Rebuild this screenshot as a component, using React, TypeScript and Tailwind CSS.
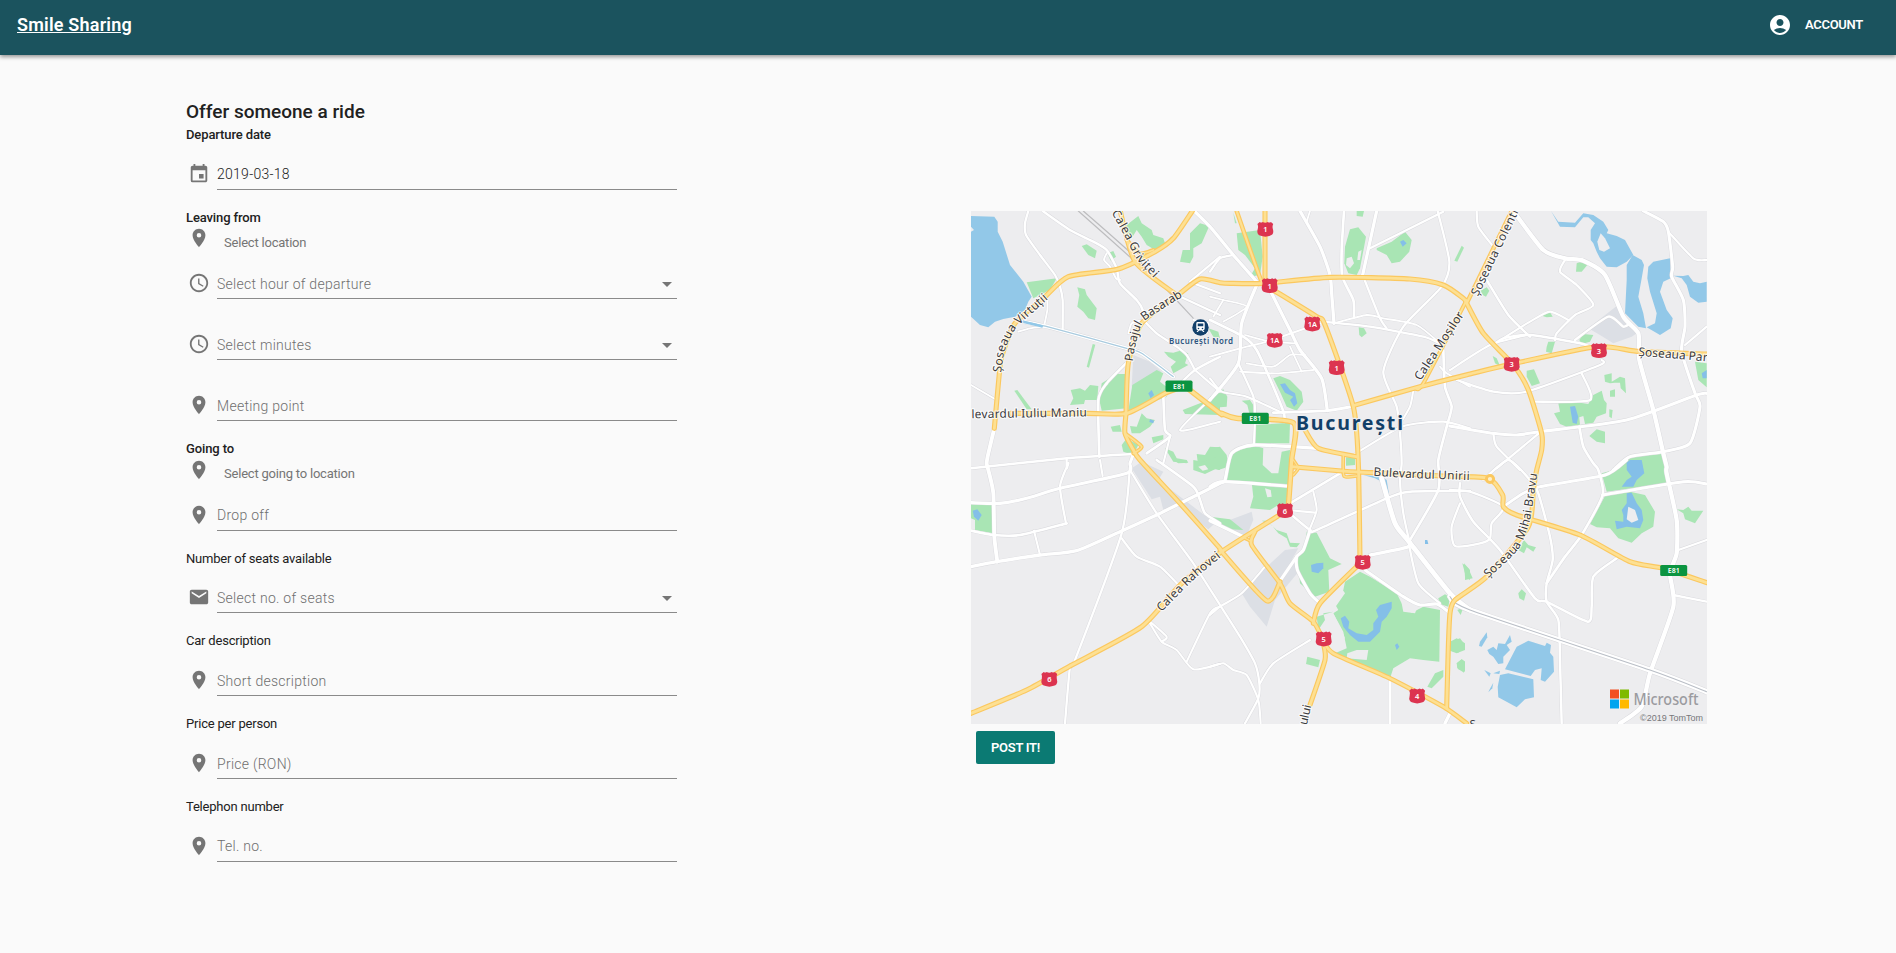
import React from "react";
import {
  MdAccessTime,
  MdAccountCircle,
  MdArrowDropDown,
  MdEvent,
  MdMail,
  MdPlace,
} from "react-icons/md";

/* ---------- map geometry ---------- */

// Map data is stored per tile, three units to a pixel.
const TILES: Record<string, [number, number]> = {
  A: [960, 200],
  B: [1210, 200],
  C: [1450, 200],
  D: [960, 460],
  E: [1210, 460],
  F: [1450, 460],
};

function toPoints(data: string): [number, number][] {
  let origin = TILES.A;
  const out: [number, number][] = [];
  for (const token of data.trim().split(/\s+/)) {
    if (TILES[token]) {
      origin = TILES[token];
      continue;
    }
    const [x, y] = token.split(",").map(Number);
    out.push([origin[0] + x / 3, origin[1] + y / 3]);
  }
  return out;
}

const polygon = (data: string) =>
  toPoints(data)
    .map(([x, y]) => `${x.toFixed(1)},${y.toFixed(1)}`)
    .join(" ");

// Catmull-Rom spline with low tension, so that roads bend softly.
function curve(data: string): string {
  const p = toPoints(data);
  const k = 0.11;
  let d = `M${p[0][0]} ${p[0][1]}`;
  for (let i = 0; i < p.length - 1; i++) {
    const a = p[i - 1] ?? p[i];
    const b = p[i];
    const c = p[i + 1];
    const e = p[i + 2] ?? c;
    d += `C${b[0] + (c[0] - a[0]) * k} ${b[1] + (c[1] - a[1]) * k} ${c[0] - (e[0] - b[0]) * k} ${c[1] - (e[1] - b[1]) * k} ${c[0]} ${c[1]}`;
  }
  return d;
}

const GREY_AREAS = [
  "A 520,465 570,485 605,515 515,560",
  "D 515,25 545,5 610,35 595,60 765,190 745,208 650,135 610,150 600,110 575,118",
  "E 45,185 125,155 130,180 115,215 95,230 40,205",
  "E 95,400 160,330 225,270 265,265 245,300 270,330 195,420 170,500 120,440",
  "C 415,385 500,318 530,370 560,400 545,410 490,430 450,405",
];

const PARKS = [
  "A 200,247 290,235 270,270 220,295",
  "A 500,75 535,48 545,70 575,90 580,105 610,115 615,130 585,150 560,135 545,110 530,90 515,115 500,95",
  "A 690,100 720,70 748,78 725,130 700,145 700,170 690,190 660,185 668,150 690,150",
  "A 365,138 380,133 410,152 405,175 385,165",
  "A 352,262 375,268 380,285 410,325 405,360 385,355 370,335 352,320 358,285",
  "A 442,160 460,153 468,170 452,182",
  "A 398,432 406,434 387,503 380,500",
  "A 163,572 172,570 215,628 200,628",
  "A 332,570 360,565 375,572 390,555 415,558 412,600 375,600 372,612 330,615 340,595",
  "A 425,550 470,522 495,522 500,625 425,632 418,600",
  "A 517,555 590,510 610,520 600,545 625,565 620,590 505,632",
  "A 612,455 640,458 660,452 685,460 675,490 685,495 640,520 632,500 648,485 625,470",
  "A 452,680 480,675 485,695 458,695",
  "A 510,678 530,680 545,640 560,655 585,660 570,680 540,700 515,700",
  "A 485,735 500,715 535,735 520,765 490,755",
  "A 668,630 720,610 780,595 780,645 675,642",
  "A 575,712 610,705 610,718 580,730",
  "A 615,745 640,755 650,775 680,780 680,790 640,785",
  "A 710,762 735,765 750,740 775,742 780,810 715,800",
  "A 745,385 775,395 780,415 760,410",
  "B 80,100 150,90 158,170 150,225 120,230 135,205 105,165 85,150",
  "B 70,38 80,70 75,70",
  "B 420,88 445,82 468,110 450,205 440,225 415,220 403,190 405,140",
  "B 440,33 462,33 458,50 440,48",
  "B 500,145 545,125 585,95 605,120 598,155 570,185 545,190 530,165 500,150",
  "B 755,137 762,143 742,185 733,182",
  "B 446,382 462,385 470,400 455,412 448,405",
  "B 190,535 210,528 240,540 275,575 280,605 260,632 230,620 210,575",
  "B 0,590 40,568 52,590 50,620 30,622 0,610",
  "B 95,602 120,600 130,615 130,640 118,640 112,615",
  "B 135,675 240,668 238,730 135,730",
  "B 0,745 30,740 50,765 55,800 25,810 0,790",
  "B 408,772 435,770 435,795 408,797",
  "E 45,65 65,-20 130,-45 160,-35 158,15 185,40 205,40 215,-25 240,-30 235,78",
  "E 125,68 235,75 228,135 205,135 180,150 120,145 130,110",
  "E 0,170 60,178 100,210 60,208 0,182",
  "D 33,133 102,133 100,220 45,210 45,180 33,175",
  "D 700,0 700,30 735,42 765,28 780,15 780,-15 760,-5 730,5",
  "D 640,0 680,0 685,8 655,10",
  "E 155,182 185,195 205,220 230,235 240,260 260,262 270,250 240,248 230,220 200,210 170,182",
  "E 290,215 320,218 360,295 395,312 355,330 358,395 315,410 270,370 262,290 285,265",
  "E 450,335 480,350 560,400 580,440 605,458 640,440 690,450 688,605 640,600 600,595 550,625 540,655 400,595 375,580 410,565 400,515 370,460 385,450 365,415 400,390 405,365",
  "E 320,470 370,455 340,460 345,480 325,510",
  "E 685,415 705,403 720,412 715,440 690,432",
  "E 292,590 330,600 325,622 288,612",
  "E 652,680 675,640 700,630 700,650 665,685",
  "E 722,545 750,535 765,555 745,578 722,572",
  "E 740,610 755,598 765,605 762,638 742,625",
  "E 762,310 780,330 780,360 765,350",
  "E 742,450 760,442 752,465",
  "C 380,190 400,182 412,195 395,215 378,215",
  "C 92,272 110,262 118,272 108,290 98,285",
  "C 275,347 300,337 308,350 290,352",
  "C 388,420 400,402 430,405 420,425 395,432",
  "C 290,440 295,425 315,425 305,460 288,455",
  "C 230,512 252,508 270,550 245,558 230,530",
  "C 128,468 140,475 150,498 135,490",
  "C 312,640 330,635 325,610 370,605 415,612 430,585 455,572 462,600 470,610 468,640 440,650 430,668 350,680 330,672",
  "C 463,525 485,520 485,545 510,530 525,535 528,580 512,565 510,548 495,548 480,550 465,545",
  "C 480,572 495,568 495,590 480,590",
  "C 478,628 488,630 485,655 478,650",
  "C 418,708 440,688 465,695 465,730 440,725",
  "C 735,485 770,490 770,562 745,540",
  "C 490,810 540,770 635,762 650,800 650,810 F 655,70 470,95 455,40",
  "F 465,108 540,95 585,105 615,155 610,200 575,220 545,248 505,235 480,205 440,202 420,192",
  "F 680,148 700,150 715,140 725,152 760,152 735,190 705,178 700,160",
  "F 205,270 222,240 235,255 258,262 250,275 230,262 222,280",
  "F 37,310 55,325 68,355 45,360 45,340",
  "F 205,400 215,388 228,400 222,422 208,415",
];

const LAKES = [
  "A 33,48 103,50 113,65 113,95 128,125 150,195 190,245 215,290 205,305 195,330 165,350 130,357 105,365 85,382 60,375 33,350 33,95 42,90 33,80",
  "C 303,33 325,65 375,68 400,40 430,45 460,65 475,90 470,100 500,108 525,120 550,165 530,185 500,202 470,200 450,175 440,155 430,130 422,120 422,90 435,70 415,52 400,52 375,82 330,80",
  "C 548,165 575,180 582,195 575,235 565,290 580,340 588,385 565,380 525,340 530,240 530,195",
  "C 595,200 610,185 660,175 662,235 640,245 630,275 650,330 668,355 662,385 630,405 590,382 615,370 620,340 600,275 592,235",
  "C 670,227 700,228 715,225 730,245 750,250 770,245 770,305 745,308 720,290 710,255 695,235",
  "F 165,628 200,560 235,542 285,558 290,548 303,555 300,578 310,590 312,635 285,665 272,660 275,625 255,630 242,648",
  "F 150,645 175,640 250,658 252,712 225,718 200,742 145,712 143,680",
  "F 112,570 130,560 140,570 145,550 165,552 180,525 185,545 170,555 180,570 160,590 160,610 145,612 130,590 118,582",
  "F 90,545 110,517 112,532 95,560 87,558",
  "F 103,630 122,640 118,650",
  "F 130,640 150,632 148,642",
  "F 118,690 130,668 127,685 115,697",
  "E 460,45 515,50 530,60 538,108 525,105 515,65 495,55",
];

const PONDS = [
  "B 210,553 225,550 240,570 255,580 262,610 252,620 240,600 250,590 225,578",
  "B 570,125 580,120 590,130 578,140",
  "E 392,475 405,467 418,485 415,505 440,520 470,525 490,510 490,490 505,470 498,450 510,435 545,425 545,445 530,470 515,485 510,515 480,545 445,545 420,525 400,500",
  "E 303,315 320,310 340,308 340,325 325,340 305,335",
  "E 645,240 652,240 655,252 645,252",
  "E 555,555 562,550 568,560 560,570",
  "F 540,0 575,0 583,40 560,60 550,80 515,80 530,60 545,50 530,30 530,8",
  "F 530,100 545,98 560,130 575,150 580,180 570,205 530,200 500,208 495,182 520,185 520,165 515,150 530,130",
  "C 360,620 375,618 385,650 380,672 368,668",
  "C 530,790 555,780 575,790 580,810 535,810",
  "C 755,520 770,510 770,535 758,535",
  "D 38,152 52,148 65,165 55,182 42,170",
  "A 565,580 575,570 582,585 572,595",
  "A 570,658 582,662 580,670 568,666",
];

// Clear patches inside the parks: lake islands and built-up blocks.
const CLEARINGS = [
  "C 442,125 452,100 465,115 480,145 462,155 448,150",
  "F 535,140 555,150 565,180 545,188 530,178",
  "E 345,475 370,460 405,535 380,555 350,520",
  "E 440,570 475,570 470,600 410,595 412,580",
  "E 575,430 590,425 625,435 615,460 580,455",
  "E 360,400 395,385 405,400 370,450 340,450",
  "E 165,85 182,90 185,110 172,112",
  "B 410,175 425,170 432,190 420,205 408,195",
  "B 445,155 455,150 450,180 442,180",
  "C 388,652 400,648 405,672 390,675",
  "D 715,20 735,15 745,28 728,32",
];

const WHITE_ROADS: [number, string][] = [
  [2, "A 205,33 195,70 198,105 240,165 285,225 300,260 308,300 308,388"],
  [2.2, "A 248,33 330,90 400,125 440,150 470,205 480,250 530,300 548,330 550,360"],
  [1.6, "A 440,160 432,180 450,200 468,235 480,240"],
  [2, "A 550,360 590,400 650,440 680,465 705,510"],
  [1.6, "A 505,400 515,370 540,362"],
  [1.6, "A 262,300 262,330 252,380"],
  [1.6, "A 252,380 210,385 175,395"],
  [1.6, "A 33,555 110,600"],
  [3.6, "A 103,685 85,760 80,790 D 85,30 100,100 103,230 112,305"],
  [2.2, "A 33,805 320,775 520,762"],
  [2.4, "A 498,490 440,550 415,600 418,770"],
  [2, "A 320,775 320,805 D 325,10 300,80 318,190"],
  [1.8, "D 420,0 428,48"],
  [2.8, "A 520,762 D 510,10 500,40 300,85 200,115 120,130 33,128"],
  [2.4, "D 33,212 100,225 180,225 320,190"],
  [1.8, "D 222,212 240,285"],
  [3, "D 33,320 110,305 240,285 350,272 480,215 590,165 700,110 780,70 E 45,60 65,-20 130,-45 320,-35"],
  [2, "D 510,20 485,220 345,600 330,620 315,790"],
  [2, "D 485,235 530,290 600,320 660,380"],
  [2, "D 510,30 590,160 700,310 780,435 E 90,530 135,610 148,670 145,715 105,790"],
  [1.8, "E 0,620 40,610 70,630 110,645 145,720 152,790"],
  [1.8, "E 150,670 190,610 300,540"],
  [1.8, "E 0,465 30,440 95,400 165,320"],
  [1.8, "D 780,440 750,460 680,605"],
  [1.8, "D 570,490 605,545 650,570 700,628 780,612"],
  [1.8, "D 570,485 620,530 605,545"],
  [2.4, "D 590,0 700,80 720,120 735,160 780,190"],
  [2.4, "A 610,590 615,690 630,710 560,760"],
  [1.8, "A 630,710 610,790"],
  [1.8, "A 780,570 660,690 780,665"],
  [1.8, "A 700,250 780,280"],
  [2, "A 650,285 780,345"],
  [1.8, "A 690,245 780,170"],
  [2, "A 780,470 705,510 650,560 610,590"],
  [1.8, "A 705,510 780,575"],
  [1.8, "A 700,360 745,370 740,400"],
  [3, "A 703,33 B 0,80 70,165 140,245"],
  [2, "B 0,215 30,175 70,165"],
  [3, "B 140,255 95,370 85,490 0,600"],
  [3, "B 180,270 240,390 270,450 335,535 352,632"],
  [2.4, "B 0,360 100,410 140,450 190,560 222,640 222,665"],
  [2.6, "B 190,638 350,632 425,620"],
  [2, "B 85,490 130,590 135,640 132,730"],
  [1.6, "B 0,470 110,440 170,425 330,370"],
  [1.5, "B 90,515 200,520 310,510"],
  [1.5, "B 110,490 190,500 240,465 285,465"],
  [1.5, "B 240,440 275,515"],
  [1.5, "B 0,290 40,300 110,320 40,365"],
  [1.5, "B 40,300 10,350"],
  [1.5, "B 105,405 180,425 255,430"],
  [1.8, "B 0,535 35,575 110,590 220,640"],
  [3, "B 270,33 330,140 360,225 365,280 372,370"],
  [1.5, "B 300,33 290,65"],
  [2.4, "B 402,33 395,150 397,230 430,300 432,350"],
  [3, "B 500,33 458,225"],
  [2, "B 458,225 510,355 530,385"],
  [2, "B 480,145 700,35"],
  [2, "B 683,33 718,185 695,260 580,380 520,515 560,620 570,700 575,790 E 570,60 580,160 597,240"],
  [2, "B 340,365 480,380 640,410 690,430"],
  [1.6, "B 372,370 470,345 520,355 620,375 690,430"],
  [2.4, "B 700,450 705,560 725,620 710,680 685,780 E 685,90 597,245"],
  [1.6, "B 690,500 710,520 780,560"],
  [1.8, "B 610,570 600,620 565,680"],
  [1.8, "B 430,765 575,680 700,665 780,685"],
  [2.8, "C 0,678 130,700 200,705 270,695 530,660 740,585 770,580"],
  [1.8, "C 0,510 120,435 230,405"],
  [2, "C 80,33 85,80 130,140"],
  [4, "C 195,40 280,150 345,175 400,182 465,225 520,350 565,400 568,480 610,630 640,760 650,800 F 650,40 680,180 680,280 660,340 670,440 600,640 575,740 510,790"],
  [2.2, "C 110,240 175,345 240,410"],
  [1.8, "C 160,415 240,365 300,335 355,360"],
  [2, "C 345,180 330,215 380,255 430,315 375,345 320,400 315,420"],
  [2.2, "C 130,435 160,415 240,405 390,430 420,440"],
  [2.2, "C 375,420 475,350 520,380 540,370"],
  [2.8, "C 580,33 640,65 655,95 668,200 665,230 700,300 705,380 695,455 735,580 750,620 720,730 640,755 540,770 490,810"],
  [1.8, "C 655,95 730,175 770,180"],
  [1.8, "C 705,435 770,380"],
  [2, "C 20,540 130,575 230,575 450,495 455,480"],
  [2, "C 395,520 420,600 250,605"],
  [2, "C 270,697 140,805"],
  [2, "C 130,700 140,740 210,810"],
  [2.6, "F 530,0 465,45 270,80 220,100 160,140"],
  [2.2, "F 100,60 175,0 240,60 265,100 300,230 308,300 290,370 290,425 325,480 330,600 335,790"],
  [2.4, "C 388,680 400,740 430,790 F 445,30 458,105 395,225 345,290 290,370"],
  [2.8, "F 458,105 700,65 770,72"],
  [2.2, "F 500,295 430,350 425,440 413,485 290,425 255,415 150,270 70,185 30,110 30,70"],
  [2, "F 0,90 60,95 160,140 125,190 120,235 90,250 15,258 5,200 30,130"],
  [2, "F 685,270 770,240"],
  [2, "F 670,405 770,425"],
  [5, "F 0,410 60,450 600,630 770,695"],
  [4.6, "E 515,55 555,190 597,245 720,400 780,450"],
  [3, "E 480,285 590,262 600,245"],
  [2.8, "E 465,330 580,410 630,435 680,432 715,455"],
  [2, "E 597,255 625,370 690,430"],
  [2.8, "E 0,80 40,65 230,78"],
  [2.4, "E 240,130 390,40"],
  [1.8, "E 310,95 320,150 300,205"],
  [1.8, "E 235,150 315,158"],
  [2.2, "E 245,165 300,210 320,210 530,115 600,95 780,93"],
  [2.8, "E 300,210 280,270 260,290 262,330 300,400 330,430"],
  [2.8, "E 260,290 205,370"],
  [2.6, "E 540,665 540,790"],
  [3, "E 720,760 705,790"],
  [3.4, "A 190,365 270,382 500,445 545,460 640,530"],
  [3, "E 0,182 100,230"],
];

const YELLOW_ROADS: [number, string][] = [
  [4.6, "A 103,685 118,520 125,470 165,370 250,295 325,230 475,207 585,155 640,115 697,33"],
  [3.6, "A 500,120 540,160 580,150"],
  [4.6, "A 480,30 525,185 650,285"],
  [4.6, "A 498,640 495,700 520,750 D 540,0 660,130 780,265 E 35,275 170,422 210,365"],
  [3.6, "A 495,700 545,740 520,760"],
  [4.6, "A 150,640 380,640 500,640 615,580 670,560"],
  [5, "A 670,555 780,640 B 35,640 80,655 250,668 245,780 E 235,140"],
  [4.6, "A 498,640 505,490 545,370 660,280 720,237 780,248 B 60,250 160,250 360,232 600,237 700,255 760,295 C 50,310 100,400 190,495 235,570 275,700 275,750 260,810 F 250,90 235,200 110,350 15,420 0,460 E 715,560 710,745"],
  [4, "B 80,33 155,245 180,255"],
  [4.6, "B 165,33 165,245"],
  [4.6, "B 190,270 320,350 345,375 430,620 445,790 E 450,300"],
  [4.6, "B 430,617 630,560 780,522 C 180,493 440,440 570,455 770,462"],
  [3.6, "B 770,300 640,550 615,565"],
  [4, "C 50,310 185,33"],
  [4.6, "B 285,690 325,745 440,770"],
  [4.6, "E 245,20 420,35 490,38 700,48 F 115,55 158,105 160,140 200,165 390,225 540,305 640,325 770,368"],
  [3.2, "E 400,-15 402,48 440,48"],
  [4.6, "E 225,155 35,275 D 660,375 545,500 330,618 200,690 33,760"],
  [4.4, "E 135,215 125,255 210,370 240,430 310,485 340,540 370,580 540,655 700,740 770,790"],
  [3, "E 105,235 125,245"],
  [4.6, "E 450,310 330,430 310,490"],
  [4.6, "E 340,550 345,600 300,735"],
  [3, "E 250,0 265,25 250,45"],
];

const LABELS: { id: string; path: string; text: string; length: number }[] = [
  { id: "virtutii", path: "A 123,518 135,450 168,385 258,303 285,280", text: "Șoseaua Virtuții", length: 91 },
  { id: "grivitei", path: "A 455,38 500,120 530,178 582,235 600,253", text: "Calea Griviței", length: 78 },
  { id: "basarab", path: "A 518,485 530,420 555,362 668,290 700,270", text: "Pasajul Basarab", length: 88 },
  { id: "maniu", path: "A 35,655 390,649", text: "levardul Iuliu Maniu", length: 115 },
  { id: "mosilor", path: "B 632,543 770,333", text: "Calea Moșilor", length: 79 },
  { id: "colentina", path: "C 84,290 210,26", text: "Șoseaua Colenti", length: 94 },
  { id: "pantelimon", path: "C 565,467 700,478 785,486", text: "Șoseaua Par", length: 69 },
  { id: "unirii", path: "E 490,47 600,54 795,61", text: "Bulevardul Unirii", length: 96 },
  { id: "bravu", path: "F 115,355 205,268 240,180 262,38 264,20", text: "Șoseaua Mihai Bravu", length: 120 },
  { id: "rahovei", path: "D 605,456 700,360 785,290 810,270", text: "Calea Rahovei", length: 81 },
  { id: "ului", path: "E 290,796 308,720", text: "ului", length: 20 },
];

const SHIELDS: [number, number, string][] = [
  [1265.3, 229.3, "1"],
  [1269.7, 285.7, "1"],
  [1312.3, 324, "1A"],
  [1274.7, 340.3, "1A"],
  [1336.7, 367.7, "1"],
  [1511.7, 364.3, "3"],
  [1599, 350.7, "3"],
  [1049.3, 679.3, "6"],
  [1285, 510.7, "6"],
  [1362.7, 562.3, "5"],
  [1323.7, 639, "5"],
  [1417.2, 696, "4"],
];

const E_ROADS: [number, number][] = [
  [1179, 386.2],
  [1255.3, 418.4],
  [1673.7, 570.5],
];

function RoadMap() {
  return (
    <svg
      viewBox="971 211 736 513"
      className="block h-[513px] w-[736px] bg-[#ededef] font-['Noto_Sans','Open_Sans',sans-serif]"
      role="img"
      aria-label="București"
    >
      {GREY_AREAS.map((d) => (
        <polygon key={d} points={polygon(d)} fill="#dcdfe5" />
      ))}
      {PARKS.map((d) => (
        <polygon key={d} points={polygon(d)} fill="#a9e5b4" />
      ))}
      {LAKES.map((d) => (
        <polygon key={d} points={polygon(d)} fill="#92c8e8" />
      ))}
      {PONDS.map((d) => (
        <polygon key={d} points={polygon(d)} fill="#84bfe8" />
      ))}
      {CLEARINGS.map((d) => (
        <polygon key={d} points={polygon(d)} fill="#ededef" />
      ))}
      <g fill="#a9e5b4">
        <polygon points={polygon("F 0,545 20,535 45,550 45,570 20,580 0,572")} />
        <polygon points={polygon("F 20,610 35,598 45,605 45,635 25,628")} />
      </g>

      <g fill="none" strokeLinecap="round" strokeLinejoin="round">
        <g stroke="#bdbdbf">
          <path d={curve("A 355,33 520,180 575,235")} strokeWidth="1.2" />
          <path d={curve("A 370,33 535,180 700,355")} strokeWidth="1.2" />
        </g>
        {WHITE_ROADS.map(([w, d]) => (
          <path key={d} d={curve(d)} stroke="#d8d8dc" strokeWidth={w + 1.1} />
        ))}
        {WHITE_ROADS.map(([w, d]) => (
          <path key={d} d={curve(d)} stroke="#ffffff" strokeWidth={w + 0.3} />
        ))}
        <path d={curve("A 190,365 270,382 500,445 545,460 640,530")} stroke="#a9cbdf" strokeWidth="1.2" />
        <path d={curve("A 190,365 245,379")} stroke="#92c8e8" strokeWidth="2.6" />
        <path d={curve("F 0,410 60,450 600,630 770,695")} stroke="#b9bec6" strokeWidth="1.1" />
        {YELLOW_ROADS.map(([w, d]) => (
          <path key={d} d={curve(d)} stroke="#fbc85f" strokeWidth={w + 0.5} />
        ))}
        {YELLOW_ROADS.map(([w, d]) => (
          <path key={d} d={curve(d)} stroke="#fde093" strokeWidth={w - 1.8} />
        ))}
        <circle cx="1490" cy="479" r="3.6" stroke="#fbc85f" strokeWidth="3" fill="#fdf0cc" />
      </g>

      {LABELS.map((l) => (
        <g key={l.id}>
          <path id={l.id} d={curve(l.path)} fill="none" />
          <text
            fontSize="11.9"
            fill="#3a3a3e"
            stroke="#ffffff"
            strokeOpacity="0.75"
            strokeWidth="2.2"
            strokeLinejoin="round"
            paintOrder="stroke"
            textLength={l.length}
          >
            <textPath href={`#${l.id}`}>{l.text}</textPath>
          </text>
        </g>
      ))}
      <text x="1469.5" y="728" fontSize="11.5" fill="#3a3a3e">
        S
      </text>

      {SHIELDS.map(([x, y, n]) => (
        <g key={`${x}`} transform={`translate(${x} ${y})`}>
          <path
            d="M-5.6-7.4Q-4-6.2-2.6-7.4Q0-5.8 2.6-7.4Q4-6.2 5.6-7.4L7.9-5.3Q6.8-3 7.5-.6Q8.6 2.8 7.2 5Q5.4 7 0 7.4Q-5.4 7-7.2 5Q-8.6 2.8-7.5-.6Q-6.8-3-7.9-5.3Z"
            fill="#dc3450"
          />
          <text y="2.9" textAnchor="middle" fontSize="7.5" fontWeight="600" fill="#ffffff">
            {n}
          </text>
        </g>
      ))}
      {E_ROADS.map(([x, y]) => (
        <g key={`${x}`} transform={`translate(${x} ${y})`}>
          <rect x="-13.5" y="-5.6" width="27" height="11.2" rx="1.6" fill="#0b9440" />
          <text y="2.6" textAnchor="middle" fontSize="7" fontWeight="600" fill="#ffffff">
            E81
          </text>
        </g>
      ))}

      <g transform="translate(1200.5 327.5)">
        <circle r="8.2" fill="#12406b" />
        <path
          d="M-3-5.4H3Q4.2-5.4 4.2-4V1Q4.2 2.6 2.6 2.8L4 4.6H2.6L1.4 3H-1.4L-2.6 4.6H-4L-2.6 2.8Q-4.2 2.6-4.2 1V-4Q-4.2-5.4-3-5.4ZM-2.8-4V-1.2H2.8V-4ZM-2 .2A.8.8 0 1 0-2 1.8.8.8 0 1 0-2 .2ZM2 .2A.8.8 0 1 0 2 1.8.8.8 0 1 0 2 .2Z"
          fill="#ffffff"
          fillRule="evenodd"
        />
      </g>
      <text
        x="1169"
        y="343.6"
        fontSize="8"
        fontWeight="600"
        fill="#2d5680"
        stroke="#ededef"
        strokeWidth="2"
        paintOrder="stroke"
        textLength="64"
      >
        București Nord
      </text>
      <text
        x="1296"
        y="430"
        fontSize="19.6"
        fontWeight="700"
        fill="#123f68"
        stroke="#ededef"
        strokeWidth="2.4"
        paintOrder="stroke"
        textLength="107"
      >
        București
      </text>

      <rect x="1610" y="689.5" width="9" height="9" fill="#f25022" />
      <rect x="1620" y="689.5" width="9" height="9" fill="#7fba00" />
      <rect x="1610" y="699.5" width="9" height="9" fill="#00a4ef" />
      <rect x="1620" y="699.5" width="9" height="9" fill="#ffb900" />
      <text x="1633.5" y="705" fontSize="16" fontWeight="500" fill="#9b9b9f" textLength="65" lengthAdjust="spacingAndGlyphs">
        Microsoft
      </text>
      <text
        x="1640"
        y="720.6"
        fontSize="9"
        fill="#77777b"
        fontFamily="Liberation Sans"
        textLength="63"
      >
        ©2019 TomTom
      </text>
    </svg>
  );
}

/* ---------- form ---------- */

type Icon = React.ComponentType<{ className?: string }>;

function Field({
  icon: IconGlyph,
  text,
  className,
  select = false,
  filled = false,
  raised = false,
}: {
  icon: Icon;
  text: string;
  className: string;
  select?: boolean;
  filled?: boolean;
  raised?: boolean;
}) {
  return (
    <div className={`flex items-end ${className}`}>
      <IconGlyph className="mr-[7.5px] mb-[5px] ml-[1.5px] size-[22px] shrink-0 text-[#757575]" />
      <div
        className={`flex flex-1 items-end justify-between border-b border-[#8a8a8a] ${raised ? "pb-[5px]" : "pb-[4px]"}`}
      >
        <span
          className={`text-sm leading-5 font-light tracking-[0.27px] ${filled ? "text-[#212121]" : "text-[#6f6f6f]"}`}
        >
          {text}
        </span>
        {select && <MdArrowDropDown className="-my-0.5 -mr-0.5 size-6 text-[#757575]" />}
      </div>
    </div>
  );
}

function Label({ text, className = "", bold = false }: { text: string; className?: string; bold?: boolean }) {
  return (
    <div
      className={`h-5 text-[13px] leading-5 ${bold ? "font-medium tracking-[-0.12px]" : "font-normal tracking-[-0.21px]"} text-[#212121] ${className}`}
    >
      {text}
    </div>
  );
}

function LocationPicker({ text, className }: { text: string; className: string }) {
  return (
    <div className="flex h-[22px] items-start pl-[1.5px]">
      <MdPlace className={`size-[22px] text-[#757575] ${className}`} />
      <span className="mt-[4.5px] ml-[14.5px] text-[13px] leading-5 tracking-[-0.21px] text-[#757575]">
        {text}
      </span>
    </div>
  );
}

export default function App() {
  return (
    <div className="min-h-[953px] bg-[#fafafa] font-[Roboto,sans-serif] text-[#212121]">
      <header className="relative flex h-[55px] items-center justify-between bg-[#1b535e] pr-[33px] pb-[6px] pl-[17px] text-white shadow-[0_2px_4px_rgba(0,0,0,0.4)]">
        <a className="text-[18px] leading-6 font-semibold tracking-[0.2px] underline">Smile Sharing</a>
        <div className="flex items-center gap-[13px]">
          <MdAccountCircle className="size-6" />
          <span className="text-[13px] leading-5 font-semibold tracking-[-0.3px]">ACCOUNT</span>
        </div>
      </header>

      <main className="flex items-start pt-[44px] pl-[186px]">
        <form className="flex w-[491px] flex-col">
          <h1 className="text-[19px] leading-[26px] font-medium">Offer someone a ride</h1>
          <Label text="Departure date" bold />
          <Field icon={MdEvent} text="2019-03-18" className="h-[45px]" filled raised />

          <Label text="Leaving from" className="mt-[18px]" bold />
          <LocationPicker text="Select location" className="-mt-px" />
          <Field icon={MdAccessTime} text="Select hour of departure" className="h-[49px]" select />
          <Field icon={MdAccessTime} text="Select minutes" className="h-[61px]" select />
          <Field icon={MdPlace} text="Meeting point" className="h-[61px]" />

          <Label text="Going to" className="mt-[18px]" bold />
          <LocationPicker text="Select going to location" className="mt-0" />
          <Field icon={MdPlace} text="Drop off" className="h-[50px]" raised />

          <Label text="Number of seats available" className="mt-[18px]" />
          <Field icon={MdMail} text="Select no. of seats" className="h-[44px]" select />

          <Label text="Car description" className="mt-[18px]" />
          <Field icon={MdPlace} text="Short description" className="h-[45px]" />

          <Label text="Price per person" className="mt-[18px]" />
          <Field icon={MdPlace} text="Price (RON)" className="h-[45px]" />

          <Label text="Telephon number" className="mt-[18px]" />
          <Field icon={MdPlace} text="Tel. no." className="h-[45px]" raised />
        </form>

        <section className="mt-[112px] ml-[294px] w-[736px]">
          <RoadMap />
          <button className="mt-[7px] ml-[5px] h-[33px] w-[79px] rounded-[2px] bg-[#0b7a73] text-[13px] font-semibold tracking-[-0.25px] text-white">
            POST IT!
          </button>
        </section>
      </main>
    </div>
  );
}
